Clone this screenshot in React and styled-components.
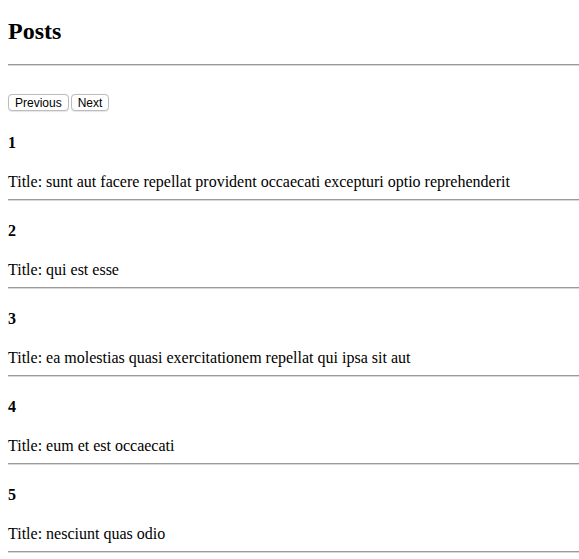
import React from "react";
import styled, { createGlobalStyle } from "styled-components";

const Global = createGlobalStyle`
  html, body { margin: 0; padding: 0; background: #fff; }
  body { font-family: "Liberation Serif", "Times New Roman", serif; color: #000; }
`;

const Page = styled.div`
  padding: 0 0 0 8px;
  display: flex;
  flex-direction: column;
`;

const Heading = styled.h2`
  margin: 17px 0 19px;
  font-size: 24px;
  line-height: 28px;
  font-weight: bold;
`;

const Rule = styled.hr`
  margin: 0;
  height: 0;
  border: 0;
  border-top: 1px solid #9a9a9a;
  border-bottom: 1px solid #d8d8d8;
`;

const Pager = styled.div`
  display: flex;
  gap: 2px;
  margin-top: 28px;
`;

const PageButton = styled.button`
  font-family: "Liberation Sans", Arial, sans-serif;
  font-size: 12px;
  line-height: 14px;
  height: 17px;
  padding: 0 6px;
  background: #fff;
  color: #000;
  border: 1px solid #bcbcbc;
  border-radius: 4px;
  box-shadow: 0 0.5px 1px rgba(0, 0, 0, 0.1);
`;

const PostList = styled.div`
  display: flex;
  flex-direction: column;
  gap: 21px;
  padding-top: 23px;
`;

const Post = styled.div`
  display: flex;
  flex-direction: column;
`;

const PostBody = styled.div`
  display: flex;
  flex-direction: column;
  gap: 21px;
  padding-bottom: 8px;
`;

const PostId = styled.h4`
  margin: 0;
  font-size: 16px;
  line-height: 18px;
  font-weight: bold;
`;

const PostTitle = styled.p`
  margin: 0;
  font-size: 16px;
  line-height: 18px;
`;

const posts = [
  { id: 1, title: "sunt aut facere repellat provident occaecati excepturi optio reprehenderit" },
  { id: 2, title: "qui est esse" },
  { id: 3, title: "ea molestias quasi exercitationem repellat qui ipsa sit aut" },
  { id: 4, title: "eum et est occaecati" },
  { id: 5, title: "nesciunt quas odio" },
];

export default function App() {
  return (
    <>
      <Global />
      <Page>
        <Heading>Posts</Heading>
        <Rule />
        <Pager>
          <PageButton>Previous</PageButton>
          <PageButton>Next</PageButton>
        </Pager>
        <PostList>
          {posts.map((p) => (
            <Post key={p.id}>
              <PostBody>
                <PostId>{p.id}</PostId>
                <PostTitle>Title: {p.title}</PostTitle>
              </PostBody>
              <Rule />
            </Post>
          ))}
        </PostList>
      </Page>
    </>
  );
}
